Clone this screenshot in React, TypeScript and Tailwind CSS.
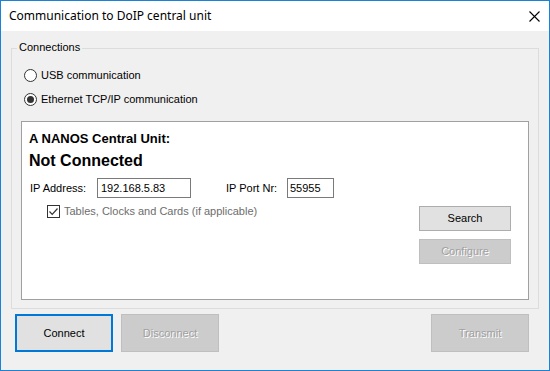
import React from 'react';

const sans = { fontFamily: '"Liberation Sans", Arial, sans-serif' };

const Radio: React.FC<{ checked?: boolean; label: string }> = ({ checked, label }) => (
  <div className="flex items-center h-[13px]">
    <span className="w-[13px] h-[13px] rounded-full border border-[#333] bg-white flex items-center justify-center">
      {checked && <span className="w-[7px] h-[7px] rounded-full bg-[#333]" />}
    </span>
    <span className="ml-[4px] text-[11px] text-black leading-none">{label}</span>
  </div>
);

const Button: React.FC<{ label: string; disabled?: boolean; focused?: boolean; className?: string }> = ({
  label,
  disabled,
  focused,
  className = '',
}) => (
  <div
    className={`flex items-center justify-center text-[11px] ${className} ${
      disabled
        ? 'bg-[#cccccc] border border-[#bfbfbf] text-[#a0a0a0] [text-shadow:1px_1px_0_#ffffff]'
        : focused
        ? 'bg-[#e1e1e1] border-2 border-[#0078d7] text-black'
        : 'bg-[#e1e1e1] border border-[#adadad] text-black'
    }`}
  >
    {label}
  </div>
);

export default function App() {
  return (
    <div className="w-[550px] h-[371px] border border-[#1883d7] bg-[#f0f0f0] flex flex-col" style={sans}>
      {/* Title bar */}
      <div className="h-[30px] bg-white flex items-center justify-between pl-[8px] pr-[9px]">
        <span className="text-[12px] text-black" style={{ fontFamily: '"Noto Sans", "Open Sans", sans-serif' }}>
          Communication to DoIP central unit
        </span>
        <svg width="11" height="11" viewBox="0 0 11 11" className="mt-[1px]">
          <path d="M0.5 0.5 L10.5 10.5 M10.5 0.5 L0.5 10.5" stroke="#000" strokeWidth="1.1" />
        </svg>
      </div>

      {/* Connections group */}
      <div className="relative ml-[10px] mr-[10px] mt-[17px] h-[261px] border border-[#dcdcdc] flex flex-col">
        <span className="absolute left-[5px] -top-[7px] px-[2px] bg-[#f0f0f0] text-[11px] leading-none text-black">
          Connections
        </span>
        <div className="flex flex-col gap-[11px] pl-[12px] mt-[20px]">
          <Radio label="USB communication" />
          <Radio checked label="Ethernet TCP/IP communication" />
        </div>

        <div className="mx-[9px] mt-[15px] h-[179px] bg-white border border-[#a0a0a0] pl-[7px] pr-[17px] pt-[9px] flex flex-col">
          <div className="text-[13px] font-bold leading-[15px]">A NANOS Central Unit:</div>
          <div className="text-[16px] font-bold leading-[18px] mt-[6px]">Not Connected</div>
          <div className="flex items-center mt-[8px] text-[11px]">
            <span className="ml-[1px] w-[67px]">IP Address:</span>
            <div className="w-[94px] h-[20px] border border-[#7a7a7a] bg-white pl-[3px] flex items-center">192.168.5.83</div>
            <span className="ml-[35px] w-[61px]">IP Port Nr:</span>
            <div className="w-[47px] h-[20px] border border-[#7a7a7a] bg-white pl-[2px] flex items-center">55955</div>
          </div>
          <div className="flex items-start justify-between mt-[8px]">
            <div className="flex items-center ml-[18px] -mt-[3px]">
              <span className="w-[13px] h-[13px] border border-[#333] bg-white flex items-center justify-center">
                <svg width="11" height="11" viewBox="0 0 11 11">
                  <path d="M1.5 5.5 L4.2 8.3 L9.5 2.5" fill="none" stroke="#333" strokeWidth="1.2" />
                </svg>
              </span>
              <span className="ml-[4px] text-[11px] text-[#6d6d6d]">Tables, Clocks and Cards (if applicable)</span>
            </div>
            <div className="flex flex-col gap-[8px]">
              <Button label="Search" className="w-[92px] h-[25px]" />
              <Button label="Configure" disabled className="w-[92px] h-[25px]" />
            </div>
          </div>
        </div>
      </div>

      {/* Bottom buttons */}
      <div className="flex items-start mt-[5px] pl-[14px] pr-[20px]">
        <Button label="Connect" focused className="w-[98px] h-[38px]" />
        <Button label="Disconnect" disabled className="w-[98px] h-[38px] ml-[8px]" />
        <div className="flex-1" />
        <Button label="Transmit" disabled className="w-[98px] h-[38px]" />
      </div>
    </div>
  );
}
